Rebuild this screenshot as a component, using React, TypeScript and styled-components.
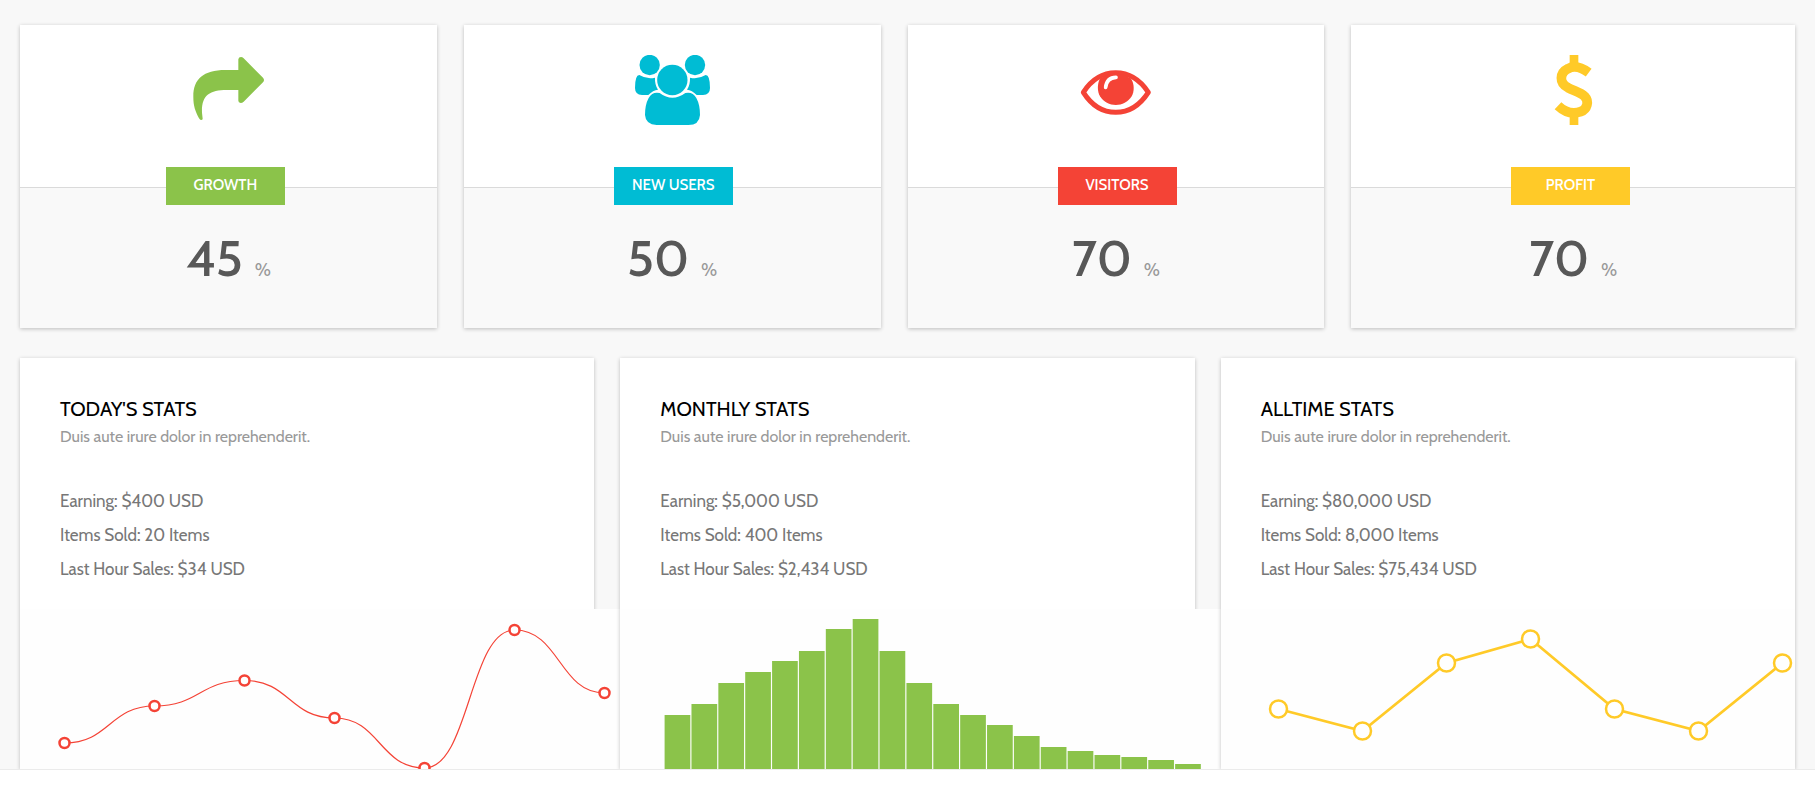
import React from 'react';
import styled, { createGlobalStyle } from 'styled-components';

const GlobalStyle = createGlobalStyle`
  *, *::before, *::after { box-sizing: border-box; }
  body {
    margin: 0;
    background: #fff;
    color: #777;
    font-family: Cabin, Lato, 'Liberation Sans', sans-serif;
  }
  h2, p, ul { margin: 0; padding: 0; }
`;

const GREEN = '#8bc34a';
const CYAN = '#00bcd4';
const RED = '#f44336';
const YELLOW = '#ffca28';

const Dashboard = styled.main`
  display: flex;
  flex-direction: column;
  gap: 30px;
  padding: 25px 20px 0;
  background: #f8f8f8;
  border-bottom: 1px solid #ebebeb;
  overflow: hidden;
`;

const CounterRow = styled.section`
  display: grid;
  grid-template-columns: repeat(4, 1fr);
`;

const Card = styled.article`
  background: #fff;
  box-shadow: 0 1px 4px rgba(0, 0, 0, 0.24);
`;

const CounterCard = styled(Card)`
  margin-right: 27px;

  &:last-child {
    margin-right: 0;
  }
`;

const IconArea = styled.div`
  display: flex;
  justify-content: center;
  height: 162px;
  padding-top: 30px;
`;

const CounterIcon = styled.svg`
  width: 75px;
  height: 70px;
`;

const CounterBody = styled.div`
  height: 141px;
  border-top: 1px solid #dadada;
  background: #f9f9f9;
`;

const Label = styled.div<{ $color: string; $start: string }>`
  width: 119px;
  height: 38px;
  margin: -21px 0 0 ${(p) => p.$start};
  background: ${(p) => p.$color};
  color: #fff;
  font-size: 15px;
  font-weight: 500;
  line-height: 36px;
  text-align: center;
`;

const Value = styled.p`
  display: flex;
  justify-content: center;
  align-items: baseline;
  gap: 12px;
  padding-top: 24px;
  color: #585858;
  font-size: 50px;
  font-weight: 500;
  line-height: 60px;
`;

const Unit = styled.span`
  color: #999;
  font-size: 18px;
  font-weight: 400;
`;

const StatsRow = styled.section`
  display: grid;
  grid-template-columns: repeat(3, minmax(0, 1fr));
  gap: 26px;
`;

const StatsCard = styled(Card)`
  position: relative;
`;

const StatsText = styled.div`
  height: 251px;
  padding: 37px 40px 0;
`;

const Title = styled.h2`
  color: #000;
  font-size: 20px;
  font-weight: 400;
  line-height: 28px;
`;

const Subtitle = styled.p`
  color: #999;
  font-size: 16px;
  line-height: 28px;
`;

const StatsList = styled.ul`
  padding-top: 33px;
  list-style: none;
  font-size: 17px;
  line-height: 34px;
`;

const ChartBox = styled.div<{ $wide: boolean }>`
  height: 160px;
  margin-right: ${(p) => (p.$wide ? '-26px' : '0')};
  background: #fefefe;
  overflow: hidden;
`;

const ChartSvg = styled.svg`
  display: block;
  height: 160px;
`;

const GrowthIcon = () => (
  <CounterIcon viewBox="573 165 225 210" fill={GREEN} aria-hidden="true">
    <path d="M715 210V178Q716 171 723 171Q727 171 731 175L789 233Q795 240 789 247L731 305Q727 309 722 309Q715 308 715 302V270H680C628 270 604 287 606 338L608 356Q608 360 603 360Q600 360 597 355C586 334 580 318 580 292C579 238 609 210 676 210Z" />
  </CounterIcon>
);

const UsersIcon = () => (
  <CounterIcon viewBox="585 165 225 210" fill={CYAN} aria-hidden="true">
    <circle cx="629" cy="195" r="30.500" />
    <circle cx="765" cy="195" r="30.500" />
    <circle cx="697" cy="240" r="45.500" />
    <path d="M598 225Q621 239 645 233Q644 254 654 269Q639 270 625 285H606Q585 284 585 264Q585 225 598 225Z" />
    <path d="M797 225Q774 239 750 233Q751 254 741 269Q756 270 770 285H789Q810 284 810 264Q810 225 797 225Z" />
    <path d="M659 279Q697 308 736 279Q758 274 769 294Q780 314 780 345Q778 375 745 375H650Q617 374 615 345Q615 314 626 294Q637 274 659 279Z" />
  </CounterIcon>
);

const EyeIcon = () => (
  <CounterIcon viewBox="595 165 225 210" aria-hidden="true">
    <path
      d="M611 277C662 199 754 199 806 277C754 357 662 357 611 277Z"
      fill="#fff"
      stroke={RED}
      strokeWidth="15"
      strokeLinejoin="round"
    />
    <path d="M661 236C652 252 653 275 661 289C682 324 735 324 756 289C764 275 765 252 754 236Q708 207 661 236Z" fill={RED} />
    <path d="M678 262Q681 233 709 232" fill="none" stroke="#fff" strokeWidth="11" strokeLinecap="round" />
  </CounterIcon>
);

const DollarIcon = () => (
  <CounterIcon viewBox="602 165 225 210" fill="none" stroke={YELLOW} aria-hidden="true">
    <path d="M716 165V195M716 345V375" strokeWidth="26" />
    <path
      d="M760 218C737 201 716 196 698 206C672 219 671 250 698 263C716 273 735 276 748 289C762 304 756 328 736 335C712 343 688 336 668 317"
      strokeWidth="29"
      strokeLinejoin="round"
    />
  </CounterIcon>
);

const counters = [
  { label: 'GROWTH', value: 45, color: GREEN, start: '35%', Icon: GrowthIcon },
  { label: 'NEW USERS', value: 50, color: CYAN, start: '36%', Icon: UsersIcon },
  { label: 'VISITORS', value: 70, color: RED, start: '36%', Icon: EyeIcon },
  { label: 'PROFIT', value: 70, color: YELLOW, start: '36%', Icon: DollarIcon },
];

const todayPoints = [
  [44.5, 134],
  [134.5, 97],
  [224.5, 71.5],
  [314.5, 109],
  [404.5, 159],
  [494.5, 21],
  [584.5, 84],
];

const alltimePoints = [
  [57.5, 100],
  [141.5, 122],
  [225.5, 54],
  [309.5, 30],
  [393.5, 100],
  [477.5, 122],
  [561.5, 54],
];

const monthlyBars = [54, 65, 86, 97, 108, 118, 140, 150, 118, 86, 65, 54, 44, 33, 22, 18, 14, 12, 9, 5];

const TodayChart = () => {
  const path = todayPoints
    .map(([x, y], i) => {
      if (i === 0) return `M${x} ${y}`;
      const [px, py] = todayPoints[i - 1];
      return `C${px + 45} ${py} ${x - 45} ${y} ${x} ${y}`;
    })
    .join('');
  return (
    <ChartSvg viewBox="0 0 600 160" role="img" aria-label="Today's sales">
      <path d={path} fill="none" stroke={RED} strokeWidth="1.200" />
      {todayPoints.map(([x, y]) => (
        <circle key={x} cx={x} cy={y} r="5" fill="#fff" stroke={RED} strokeWidth="2.500" />
      ))}
    </ChartSvg>
  );
};

const MonthlyChart = () => (
  <ChartSvg viewBox="0 0 600 160" role="img" aria-label="Monthly sales">
    {monthlyBars.map((h, i) => (
      <rect key={i} x={44.6 + i * 26.87} y={160 - h} width="25.700" height={h} fill={GREEN} />
    ))}
  </ChartSvg>
);

const AlltimeChart = () => (
  <ChartSvg viewBox="0 0 574 160" role="img" aria-label="All time sales">
    <polyline points={alltimePoints.join(' ')} fill="none" stroke={YELLOW} strokeWidth="2.700" />
    {alltimePoints.map(([x, y]) => (
      <circle key={x} cx={x} cy={y} r="8.500" fill="#fff" stroke={YELLOW} strokeWidth="2.500" />
    ))}
  </ChartSvg>
);

const stats = [
  { title: "TODAY'S STATS", earning: '$400', sold: '20', sales: '$34', Chart: TodayChart },
  { title: 'MONTHLY STATS', earning: '$5,000', sold: '400', sales: '$2,434', Chart: MonthlyChart },
  { title: 'ALLTIME STATS', earning: '$80,000', sold: '8,000', sales: '$75,434', Chart: AlltimeChart },
];

export default function App() {
  return (
    <>
      <GlobalStyle />
      <Dashboard>
        <CounterRow>
          {counters.map(({ label, value, color, start, Icon }) => (
            <CounterCard key={label}>
              <IconArea>
                <Icon />
              </IconArea>
              <CounterBody>
                <Label $color={color} $start={start}>
                  {label}
                </Label>
                <Value>
                  {value}
                  <Unit>%</Unit>
                </Value>
              </CounterBody>
            </CounterCard>
          ))}
        </CounterRow>
        <StatsRow>
          {stats.map(({ title, earning, sold, sales, Chart }, i) => (
            <StatsCard key={title}>
              <StatsText>
                <Title>{title}</Title>
                <Subtitle>Duis aute irure dolor in reprehenderit.</Subtitle>
                <StatsList>
                  <li>Earning: {earning} USD</li>
                  <li>Items Sold: {sold} Items</li>
                  <li>Last Hour Sales: {sales} USD</li>
                </StatsList>
              </StatsText>
              <ChartBox $wide={i < stats.length - 1}>
                <Chart />
              </ChartBox>
            </StatsCard>
          ))}
        </StatsRow>
      </Dashboard>
    </>
  );
}
